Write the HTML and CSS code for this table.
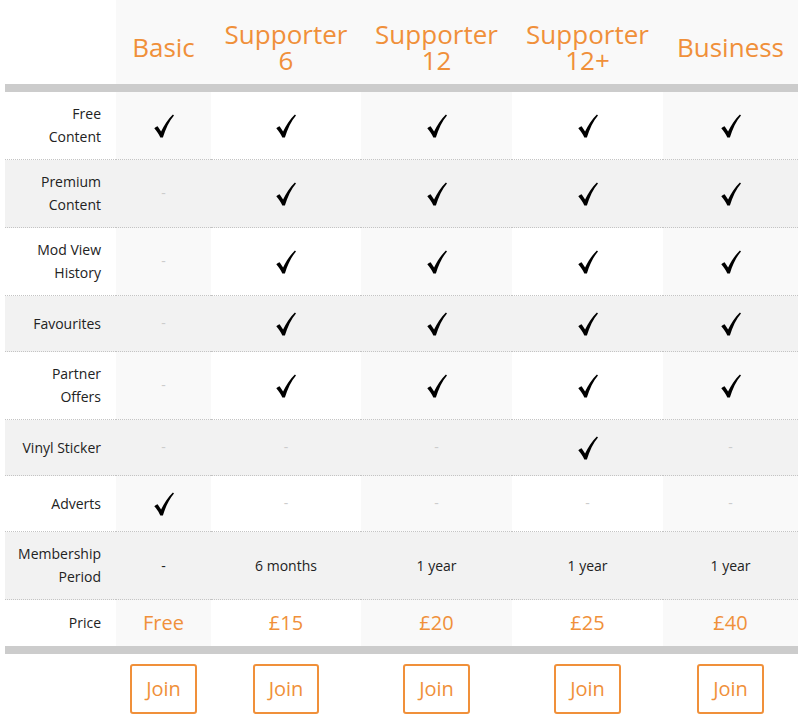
FILE: index.html
```html
<!DOCTYPE html>
<html lang="en">
<head>
<meta charset="utf-8">
<title>Membership</title>
<link rel="stylesheet" href="styles.css">
</head>
<body>
<svg width="0" height="0" class="defs" aria-hidden="true">
  <defs>
    <symbol id="tick" viewBox="0 0 20 24">
      <path d="M0.3,14.2 C1.4,13.2 2.5,12.6 3.6,12.3 L7.1,17.6 C10,11.2 14,5.2 18.9,0.4 L20,1.4 C15.2,7 11.6,14.6 8.9,23.6 L6.3,23.6 C4.8,20 2.8,17 0.3,14.2 Z"/>
    </symbol>
  </defs>
</svg>
<div class="wrap">
<table class="plans">
  <colgroup>
    <col class="w-label">
    <col class="w-basic">
    <col class="w-s6">
    <col class="w-s12">
    <col class="w-s12p">
    <col class="w-bus">
  </colgroup>
  <thead>
    <tr>
      <th class="corner"></th>
      <th class="plan">Basic</th>
      <th class="plan">Supporter<br>6</th>
      <th class="plan">Supporter<br>12</th>
      <th class="plan">Supporter<br>12+</th>
      <th class="plan">Business</th>
    </tr>
  </thead>
  <tbody>
    <tr class="odd">
      <th class="label">Free<br>Content</th>
      <td class="c1"><svg class="tick"><use href="#tick"/></svg></td>
      <td class="c2"><svg class="tick"><use href="#tick"/></svg></td>
      <td class="c1"><svg class="tick"><use href="#tick"/></svg></td>
      <td class="c2"><svg class="tick"><use href="#tick"/></svg></td>
      <td class="c1"><svg class="tick"><use href="#tick"/></svg></td>
    </tr>
    <tr class="even">
      <th class="label">Premium<br>Content</th>
      <td><span class="no">-</span></td>
      <td><svg class="tick"><use href="#tick"/></svg></td>
      <td><svg class="tick"><use href="#tick"/></svg></td>
      <td><svg class="tick"><use href="#tick"/></svg></td>
      <td><svg class="tick"><use href="#tick"/></svg></td>
    </tr>
    <tr class="odd">
      <th class="label">Mod View<br>History</th>
      <td class="c1"><span class="no">-</span></td>
      <td class="c2"><svg class="tick"><use href="#tick"/></svg></td>
      <td class="c1"><svg class="tick"><use href="#tick"/></svg></td>
      <td class="c2"><svg class="tick"><use href="#tick"/></svg></td>
      <td class="c1"><svg class="tick"><use href="#tick"/></svg></td>
    </tr>
    <tr class="even">
      <th class="label">Favourites</th>
      <td><span class="no">-</span></td>
      <td><svg class="tick"><use href="#tick"/></svg></td>
      <td><svg class="tick"><use href="#tick"/></svg></td>
      <td><svg class="tick"><use href="#tick"/></svg></td>
      <td><svg class="tick"><use href="#tick"/></svg></td>
    </tr>
    <tr class="odd">
      <th class="label">Partner<br>Offers</th>
      <td class="c1"><span class="no">-</span></td>
      <td class="c2"><svg class="tick"><use href="#tick"/></svg></td>
      <td class="c1"><svg class="tick"><use href="#tick"/></svg></td>
      <td class="c2"><svg class="tick"><use href="#tick"/></svg></td>
      <td class="c1"><svg class="tick"><use href="#tick"/></svg></td>
    </tr>
    <tr class="even">
      <th class="label">Vinyl Sticker</th>
      <td><span class="no">-</span></td>
      <td><span class="no">-</span></td>
      <td><span class="no">-</span></td>
      <td><svg class="tick"><use href="#tick"/></svg></td>
      <td><span class="no">-</span></td>
    </tr>
    <tr class="odd">
      <th class="label">Adverts</th>
      <td class="c1"><svg class="tick"><use href="#tick"/></svg></td>
      <td class="c2"><span class="no">-</span></td>
      <td class="c1"><span class="no">-</span></td>
      <td class="c2"><span class="no">-</span></td>
      <td class="c1"><span class="no">-</span></td>
    </tr>
    <tr class="even text">
      <th class="label">Membership<br>Period</th>
      <td>-</td>
      <td>6 months</td>
      <td>1 year</td>
      <td>1 year</td>
      <td>1 year</td>
    </tr>
    <tr class="odd price">
      <th class="label">Price</th>
      <td class="c1">Free</td>
      <td class="c2">£15</td>
      <td class="c1">£20</td>
      <td class="c2">£25</td>
      <td class="c1">£40</td>
    </tr>
  </tbody>
  <tfoot>
    <tr>
      <td></td>
      <td><a class="join" href="#">Join</a></td>
      <td><a class="join" href="#">Join</a></td>
      <td><a class="join" href="#">Join</a></td>
      <td><a class="join" href="#">Join</a></td>
      <td><a class="join" href="#">Join</a></td>
    </tr>
  </tfoot>
</table>
</div>
</body>
</html>
```
FILE: styles.css
```css
html, body {
  margin: 0;
  padding: 0;
  background: #ffffff;
}

body {
  font-family: "Open Sans", "Liberation Sans", sans-serif;
  color: #222222;
}

.defs {
  position: absolute;
  width: 0;
  height: 0;
  overflow: hidden;
}

.wrap {
  padding-left: 5px;
}

.plans {
  width: 793px;
  table-layout: fixed;
  border-collapse: separate;
  border-spacing: 0;
}

.w-label { width: 111px; }
.w-basic { width: 95px; }
.w-s6 { width: 150px; }
.w-s12 { width: 151px; }
.w-s12p { width: 151px; }
.w-bus { width: 135px; }

thead th {
  padding: 21px 0 11px;
  font-size: 26px;
  line-height: 26px;
  font-weight: 400;
  color: #f0903a;
  text-align: center;
  vertical-align: middle;
  background: #f9f9f9;
  border-bottom: 8px solid #cccccc;
}

thead th.corner {
  background: #ffffff;
}

tbody th,
tbody td {
  padding: 10px 0 11px;
  border-bottom: 1px dotted #c4c4c4;
  vertical-align: middle;
  text-align: center;
  font-size: 14px;
  line-height: 34px;
}

tbody th.label {
  text-align: right;
  padding-right: 15px;
  font-weight: 400;
  line-height: 23px;
  color: #222222;
}

tr.odd td.c1 { background: #f9f9f9; }
tr.odd td.c2 { background: #ffffff; }
tr.odd th { background: #ffffff; }
tr.even th,
tr.even td { background: #f2f2f2; }

tr.text td {
  line-height: 23px;
  color: #222222;
}

tr.price th,
tr.price td {
  line-height: 25px;
  border-bottom: 8px solid #cccccc;
}

tr.price td {
  font-size: 20px;
  color: #f0903a;
}

.tick {
  display: inline-block;
  width: 20px;
  height: 24px;
  vertical-align: middle;
  fill: #000000;
}

.no {
  color: #cccccc;
}

tfoot td {
  padding-top: 10px;
  text-align: center;
}

.join {
  display: inline-block;
  padding: 10px 14px;
  font-size: 20px;
  line-height: 26px;
  color: #f0903a;
  text-decoration: none;
  border: 2px solid #f0903a;
  border-radius: 3px;
}
```
